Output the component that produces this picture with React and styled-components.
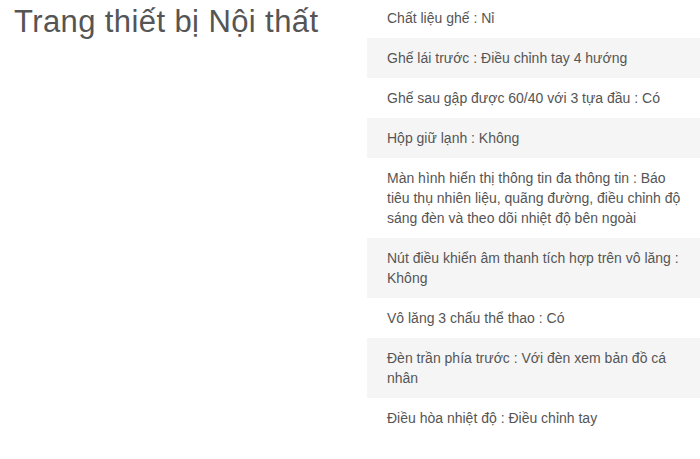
import React from 'react'
import styled, { createGlobalStyle } from 'styled-components'

const GlobalStyle = createGlobalStyle`
  body {
    margin: 0;
    background: #fff;
    font-family: "Liberation Sans", Arial, sans-serif;
    color: #555;
  }
`

const Section = styled.div`
  display: grid;
  grid-template-columns: 367px 1fr;
  width: 700px;
`

const Title = styled.h2`
  margin: 5px 0 0;
  padding-left: 14px;
  font-size: 31px;
  font-weight: normal;
  letter-spacing: 0.4px;
  line-height: 34px;
  color: #555;
`

const List = styled.ul`
  list-style: none;
  margin: -2px 0 0;
  padding: 0;
`

const Item = styled.li`
  padding: 10px 10px 10px 20px;
  font-size: 14px;
  line-height: 20px;
  color: #555;
  background: ${props => (props.$striped ? '#f5f5f5' : '#fff')};
`

const specs = [
  'Chất liệu ghế : Nỉ',
  'Ghế lái trước : Điều chỉnh tay 4 hướng',
  'Ghế sau gập được 60/40 với 3 tựa đầu : Có',
  'Hộp giữ lạnh : Không',
  'Màn hình hiển thị thông tin đa thông tin : Báo tiêu thụ nhiên liệu, quãng đường, điều chỉnh độ sáng đèn và theo dõi nhiệt độ bên ngoài',
  'Nút điều khiển âm thanh tích hợp trên vô lăng : Không',
  'Vô lăng 3 chấu thể thao : Có',
  'Đèn trần phía trước : Với đèn xem bản đồ cá nhân',
  'Điều hòa nhiệt độ : Điều chỉnh tay',
]

const App = () => (
  <>
    <GlobalStyle />
    <Section>
      <Title>Trang thiết bị Nội thất</Title>
      <List>
        {specs.map((text, i) => (
          <Item key={i} $striped={i % 2 === 1}>{text}</Item>
        ))}
      </List>
    </Section>
  </>
)

export default App
